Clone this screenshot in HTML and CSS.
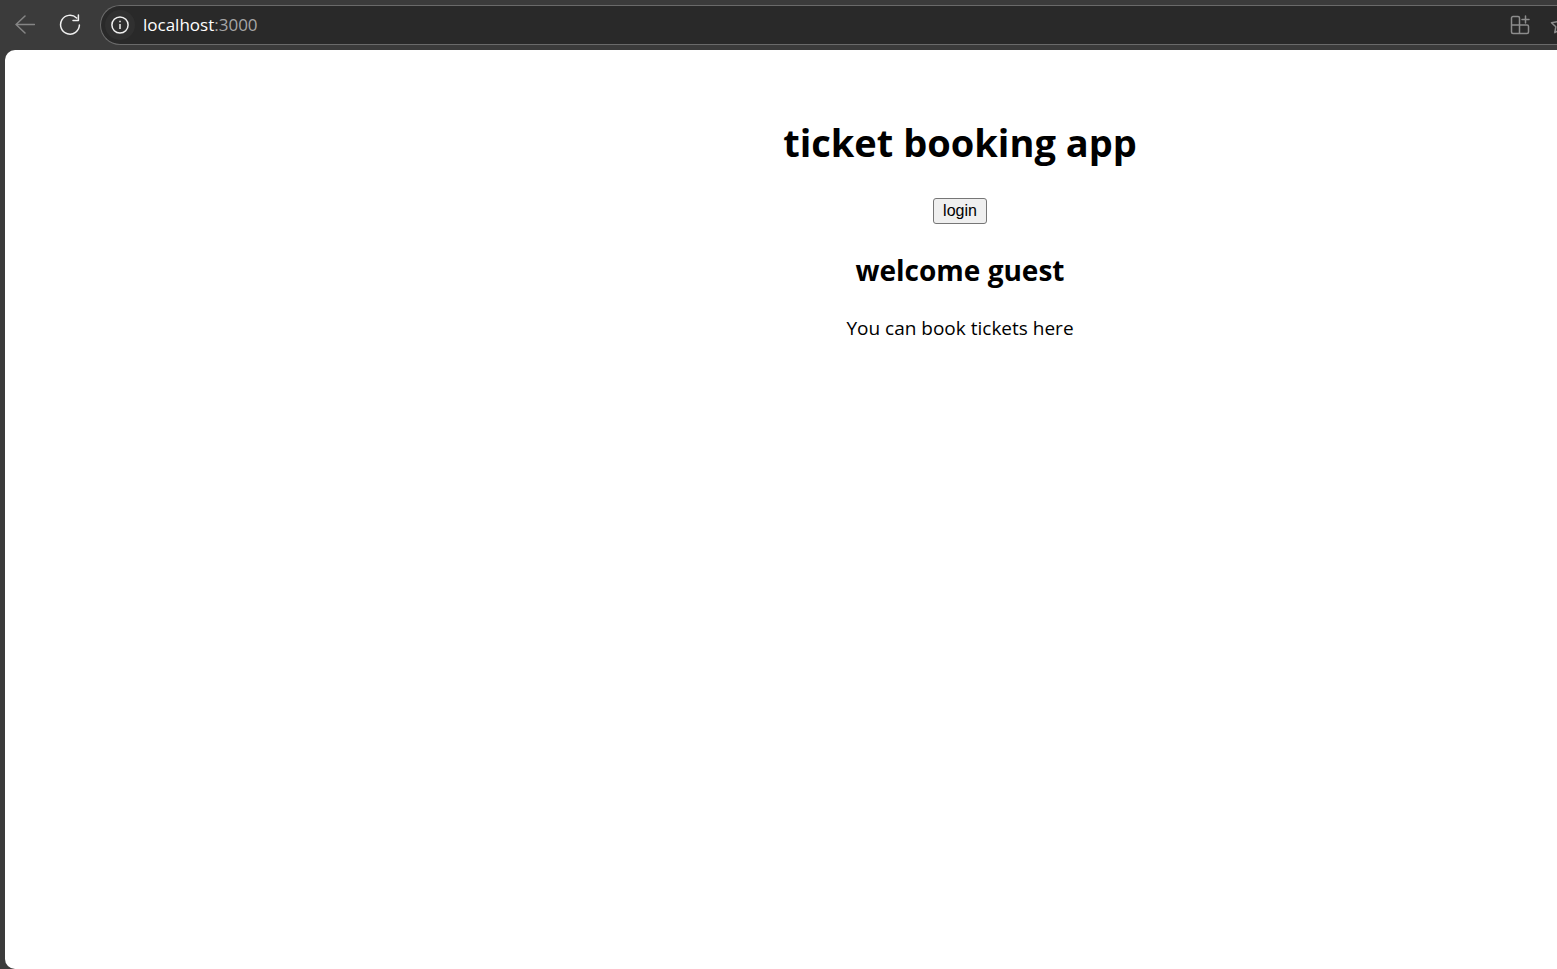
FILE: index.html
```html
<!DOCTYPE html>
<html lang="en">
<head>
<meta charset="utf-8">
<meta name="viewport" content="width=device-width, initial-scale=1">
<title>ticket booking app</title>
<link rel="stylesheet" href="styles.css">
</head>
<body>
<header class="toolbar">
  <button class="tool back" type="button" aria-label="Back" disabled>
    <svg width="20" height="20" viewBox="0 0 20 20"><path d="M19.500 9.500H1M10 1 1 9.500 10 18"/></svg>
  </button>
  <button class="tool reload" type="button" aria-label="Reload">
    <svg width="22" height="22" viewBox="0 0 22 22"><path d="M17.600 4A9.400 9.400 0 1 0 20.400 11M19.400 1v5.500H14"/></svg>
  </button>
  <div class="address">
    <button class="info" type="button" aria-label="View site information">
      <svg width="18" height="18" viewBox="0 0 18 18"><circle cx="9" cy="9" r="8.100"/><path class="stem" d="M9 8v5M9 4.800v1.500"/></svg>
    </button>
    <div class="url" role="textbox" contenteditable="true" spellcheck="false" aria-label="Address">localhost<span class="port">:3000</span></div>
    <button class="action" type="button" aria-label="App available">
      <svg width="20" height="20" viewBox="0 0 20 20"><path d="M9.500 10V3A1.500 1.500 0 0 0 8 1.500H3A1.500 1.500 0 0 0 1.500 3v14A1.500 1.500 0 0 0 3 18.500H17a1.500 1.500 0 0 0 1.500-1.500V11.500A1.500 1.500 0 0 0 17 10H1.500M9.500 18.500V10M15.500 1v7M12 4.500h7"/></svg>
    </button>
    <button class="action star" type="button" aria-label="Add to favorites">
      <svg width="20" height="20" viewBox="0 0 20 20"><path d="m10 1.500 2.600 5.300 5.900.9-4.300 4.100 1 5.800L10 14.900l-5.200 2.700 1-5.800L1.500 7.700l5.900-.9z"/></svg>
    </button>
  </div>
</header>
<main class="page">
  <h1 class="title">ticket booking app</h1>
  <button class="login" type="button">login</button>
  <h2 class="welcome">welcome guest</h2>
  <p class="note">You can book tickets here</p>
</main>
</body>
</html>
```
FILE: styles.css
```css
* {
  box-sizing: border-box;
}

body {
  display: flex;
  flex-direction: column;
  min-height: 100vh;
  margin: 0;
  background: #3b3b3b;
  font-family: "Segoe UI", "Open Sans", "Noto Sans", sans-serif;
}

.toolbar {
  display: flex;
  align-items: center;
  height: 50px;
  padding-left: 10px;
  overflow: hidden;
}

.toolbar svg {
  display: block;
  fill: none;
  stroke: currentColor;
  stroke-width: 1.5;
  stroke-linecap: round;
  stroke-linejoin: round;
}

.toolbar .stem {
  stroke-linecap: butt;
}

.toolbar button {
  display: flex;
  flex: none;
  align-items: center;
  justify-content: center;
  padding: 0;
  border: 0;
  background: none;
}

.toolbar .tool {
  width: 30px;
  height: 30px;
}

.toolbar .back {
  color: #858585;
}

.toolbar .reload {
  margin: 0 15px;
  color: #f0f0f0;
}

.address {
  display: flex;
  flex: 1;
  align-items: center;
  height: 40px;
  padding-left: 4px;
  border: 1px solid #6a6a6a;
  border-right: 0;
  border-radius: 20px 0 0 20px;
  background: #292929;
}

.toolbar .info {
  width: 30px;
  height: 30px;
  border-radius: 15px;
  background: #303030;
  color: #f0f0f0;
}

.url {
  flex: 1;
  margin-left: 8px;
  outline: none;
  color: #ffffff;
  font-size: 17px;
  line-height: 24px;
}

.port {
  color: #a6a6a6;
}

.toolbar .action {
  width: 20px;
  color: #8c8c8c;
}

.toolbar .star {
  margin: 0 -13px 0 20px;
}

.page {
  display: flex;
  flex: 1;
  flex-direction: column;
  align-items: center;
  margin-left: 5px;
  padding: 66px 0 0 358px;
  border-radius: 10px 0 0 10px;
  background: #ffffff;
  color: #000000;
}

.title {
  margin: 0;
  font-size: 38px;
  line-height: 52px;
}

.login {
  margin: 30px 0 28px;
  padding: 1px 9px;
  border: 1px solid #767676;
  border-radius: 3px;
  background: #efefef;
  color: #000000;
  font-family: "Liberation Sans", Arial, sans-serif;
  font-size: 16px;
  line-height: 22px;
}

.welcome {
  margin: 0;
  font-size: 28px;
  line-height: 36px;
}

.note {
  margin: 26px 0;
  font-size: 19px;
  line-height: 28px;
}
```
